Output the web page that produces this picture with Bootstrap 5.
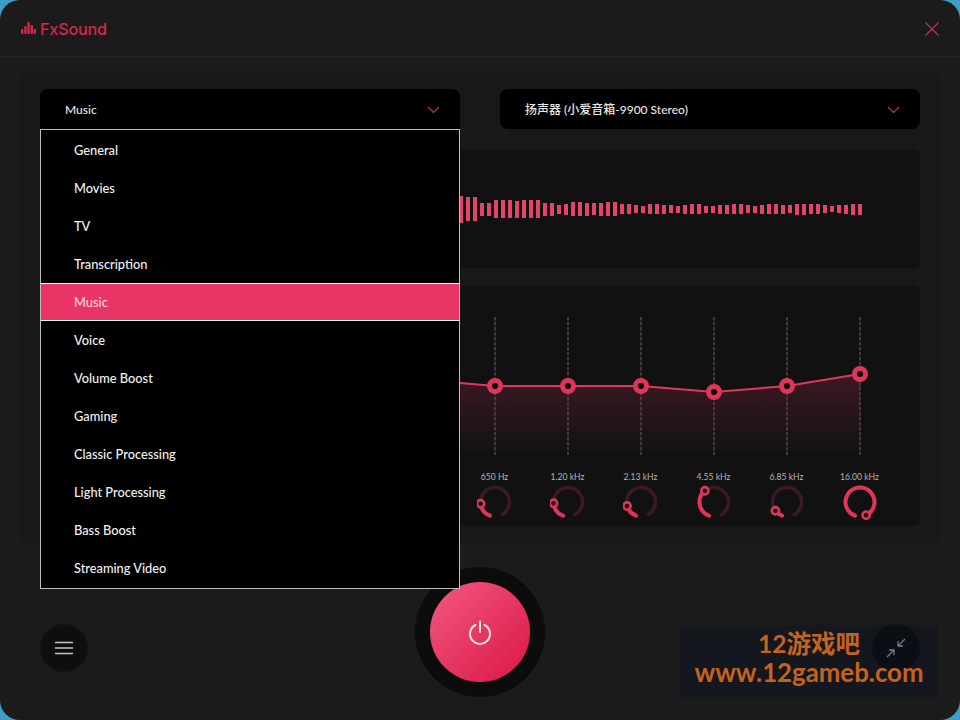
<!DOCTYPE html>
<html lang="en">

<head>
    <meta charset="UTF-8" />
    <meta name="viewport" content="width=device-width, initial-scale=1" />
    <title>FxSound</title>
    <link href="https://cdn.jsdelivr.net/npm/bootstrap@5.3.0/dist/css/bootstrap.min.css" rel="stylesheet">
    <style>
        html, body { width: 960px; height: 720px; overflow: hidden; }
        body { background: #3f9dc3; font-family: Lato, "Noto Sans CJK SC", sans-serif; color: #fff; }
        .fx-window { height: 720px; background: #1b1b1b; border-radius: 20px; position: relative; }
        .fx-header { height: 57px; padding: 2px 21px 0; border-bottom: 1px solid #252525; }
        .fx-logo { font-family: Inter, sans-serif; font-size: 16.2px; font-weight: 500; color: #d8264f; letter-spacing: -.2px; }
        .fx-panel { margin: 16px 20px 0; padding: 16px 20px 18px; height: 471px; background: #181818; border-radius: 8px; }
        .fx-select { width: 420px; height: 40px; padding: 2px 20px 0 25px; background: #000; color: #e6e6e6; font-size: 12px; font-weight: 500; border: 0; border-radius: 8px 8px 0 0; }
        .fx-select-round { border-radius: 8px; }
        .fx-select:hover, .fx-select:active { background: #000 !important; color: #e6e6e6 !important; }
        .fx-menu { width: 420px; top: 40px; left: 0; padding: 1px 0; margin: 0; background: #000; border: 1px solid #bdbdbd; border-radius: 0; z-index: 20; }
        .fx-menu .dropdown-item { height: 38px; padding: 0 33px; line-height: 38px; font-size: 12.8px; font-weight: 500; color: #f2f2f2; }
        .fx-menu .dropdown-item.active { background: #e93565; color: #fbd3dd; line-height: 36px; border-top: 1px solid #fff; border-bottom: 1px solid #fff; }
        .fx-viz { height: 118px; margin-top: 21px; padding-right: 58px; background: #111112; border-radius: 6px; gap: 3px; }
        .fx-bar { width: 4px; background: #e2456a; flex-shrink: 0; }
        .fx-eq { height: 240px; margin-top: 18px; padding-top: 26px; background: #111112; border-radius: 6px; }
        .fx-chart { display: block; }
        .fx-bands { padding-right: 24px; margin-top: 9px; }
        .fx-band { width: 73px; }
        .fx-band-label { font-size: 8.6px; line-height: 12px; color: #b4b4b4; }
        .fx-knob { display: block; margin: 1px auto 0; }
        .fx-footer { height: 130px; margin-top: 23px; padding: 0 40px; }
        .fx-round { width: 48px; height: 48px; margin-top: 32px; background: #0e0e0f; border-radius: 50%; }
        .fx-power-ring { width: 130px; height: 130px; background: #0c0c0d; border-radius: 50%; }
        .fx-power { width: 100px; height: 100px; background: linear-gradient(135deg, #f25880, #da1744); border-radius: 50%; }
        .fx-watermark { left: 680px; top: 625px; width: 258px; height: 72px; padding-bottom: 4px; background: rgba(10, 18, 40, .3); color: #c4631f; font-weight: 700; line-height: 1.15; font-family: Lato, "Noto Sans CJK SC", sans-serif; }
        .fx-wm-big { font-size: 24.5px; }
        .fx-wm-url { font-size: 25.8px; }
    </style>
</head>

<body>
    <div class="fx-window d-flex flex-column">
        <header class="fx-header d-flex justify-content-between align-items-center">
            <div class="d-flex align-items-center gap-1">
                <svg width="15" height="13" viewBox="0 0 15 13" fill="#d8264f">
                    <rect x="0" y="7" width="2.4" height="5" rx="1" />
                    <rect x="3.2" y="4" width="2.4" height="8" rx="1" />
                    <rect x="6.4" y="0" width="2.4" height="12" rx="1" />
                    <rect x="9.6" y="3" width="2.4" height="9" rx="1" />
                    <rect x="12.6" y="7" width="2.4" height="5" rx="1" />
                </svg>
                <span class="fx-logo">FxSound</span>
            </div>
            <svg width="14" height="14" viewBox="0 0 14 14" stroke="#c4325a" stroke-width="1.1">
                <path d="M0.5 0.5L13.5 13.5M13.5 0.5L0.5 13.5" />
            </svg>
        </header>

        <section class="fx-panel">
            <div class="d-flex justify-content-between">
                <div class="position-relative">
                    <button class="btn fx-select d-flex justify-content-between align-items-center" type="button">
                        <span>Music</span>
                        <svg width="13" height="8" viewBox="0 0 13 8" fill="none" stroke="#c4325a" stroke-width="1.1">
                            <path d="M1 1L6.5 6.5L12 1" />
                        </svg>
                    </button>
                    <ul id="preset-menu" class="dropdown-menu show position-absolute fx-menu"></ul>
                </div>
                <button class="btn fx-select fx-select-round d-flex justify-content-between align-items-center" type="button">
                    <span>扬声器 (小爱音箱-9900 Stereo)</span>
                    <svg width="13" height="8" viewBox="0 0 13 8" fill="none" stroke="#c4325a" stroke-width="1.1">
                        <path d="M1 1L6.5 6.5L12 1" />
                    </svg>
                </button>
            </div>

            <div id="viz" class="fx-viz d-flex justify-content-end align-items-center"></div>

            <div class="fx-eq">
                <svg id="chart" class="fx-chart" width="880" height="150" viewBox="0 0 880 150"></svg>
                <div id="bands" class="fx-bands d-flex justify-content-end"></div>
            </div>
        </section>

        <footer class="fx-footer d-flex justify-content-between align-items-center">
            <div class="fx-round d-flex justify-content-center align-items-center">
                <svg width="18" height="14" viewBox="0 0 18 14" stroke="#c8c8c8" stroke-width="1.5">
                    <path d="M0 1.5H18M0 7H18M0 12.5H18" />
                </svg>
            </div>
            <div class="fx-power-ring d-flex justify-content-center align-items-center">
                <div class="fx-power d-flex justify-content-center align-items-center">
                    <svg width="24" height="25" viewBox="0 0 24 25" fill="none" stroke="#fbe4ea" stroke-width="2" stroke-linecap="round">
                        <path d="M7.5 5A10 10 0 1 0 16.5 5M12 1.5V12" />
                    </svg>
                </div>
            </div>
            <div class="fx-round d-flex justify-content-center align-items-center">
                <svg width="22" height="22" viewBox="0 0 22 22" fill="none" stroke="#a8a8ac" stroke-width="1.3">
                    <path d="M20 2L13 9M13 4V9H18M2 20L9 13M9 18V13H4" />
                </svg>
            </div>
        </footer>

        <div class="fx-watermark position-absolute d-flex flex-column justify-content-center align-items-center">
            <div class="fx-wm-big">12游戏吧</div>
            <div class="fx-wm-url">www.12gameb.com</div>
        </div>
    </div>

    <script src="https://cdn.jsdelivr.net/npm/bootstrap@5.3.0/dist/js/bootstrap.bundle.min.js"></script>
    <script>
        // Preset list
        const presets = ["General", "Movies", "TV", "Transcription", "Music", "Voice", "Volume Boost", "Gaming",
            "Classic Processing", "Light Processing", "Bass Boost", "Streaming Video"];
        document.getElementById("preset-menu").innerHTML = presets.map(p =>
            `<li><a class="dropdown-item${p === "Music" ? " active" : ""}" href="#">${p}</a></li>`).join("");

        // Visualizer bars, heights in px
        const bars = [27, 24, 24, 13, 13, 18, 18, 18, 17, 18, 18, 18, 13, 13, 9, 11, 14, 14, 13, 12, 13, 14, 14, 10,
            10, 8, 7, 10, 10, 9, 8, 7, 9, 10, 10, 7, 7, 9, 9, 10, 10, 8, 7, 9, 10, 10, 9, 8, 11, 11, 10, 10, 8, 6, 8, 9, 11, 11];
        document.getElementById("viz").innerHTML = bars.map(h =>
            `<span class="fx-bar" style="height:${h}px"></span>`).join("");

        // EQ chart, coordinates relative to the svg (origin 40,312 on screen)
        const bands = [
            { x: 455, y: 74, label: "650 Hz", angle: -97 },
            { x: 528, y: 74, label: "1.20 kHz", angle: -95 },
            { x: 601, y: 74, label: "2.13 kHz", angle: -106 },
            { x: 674, y: 80, label: "4.55 kHz", angle: -39 },
            { x: 747, y: 74, label: "6.85 kHz", angle: -127 },
            { x: 820, y: 62, label: "16.00 kHz", angle: 155 },
        ];
        const linePts = "420,71 " + bands.map(b => `${b.x},${b.y}`).join(" ");
        let chart = `<defs><linearGradient id="fill" x1="0" y1="0" x2="0" y2="1">
            <stop offset="0" stop-color="#e8365f" stop-opacity=".2" /><stop offset="1" stop-color="#e8365f" stop-opacity="0" />
            </linearGradient></defs>`;
        chart += `<polygon points="${linePts} 820,143 420,143" fill="url(#fill)" />`;
        bands.forEach(b => {
            chart += `<line x1="${b.x}" y1="5" x2="${b.x}" y2="143" stroke="#554549" stroke-width="1.5" stroke-dasharray="3.5 1.5" />`;
        });
        chart += `<polyline points="${linePts}" fill="none" stroke="#e0385d" stroke-width="2" />`;
        bands.forEach(b => {
            chart += `<circle cx="${b.x}" cy="${b.y}" r="5.5" fill="#050505" stroke="#df3559" stroke-width="5" />`;
        });
        document.getElementById("chart").innerHTML = chart;

        // Knobs under the chart
        const pt = (a, r) => {
            const t = a * Math.PI / 180;
            return [18 + r * Math.sin(t), 18 - r * Math.cos(t)];
        };
        const arc = (from, to, r) => {
            const s = pt(from, r), e = pt(to, r);
            return `M${s[0].toFixed(2)} ${s[1].toFixed(2)}A${r} ${r} 0 ${to - from > 180 ? 1 : 0} 1 ${e[0].toFixed(2)} ${e[1].toFixed(2)}`;
        };
        const START = -160, END = 150, R = 14.5;
        document.getElementById("bands").innerHTML = bands.map(b => {
            const h = pt(b.angle, R);
            return `<div class="fx-band text-center">
                <div class="fx-band-label">${b.label}</div>
                <svg class="fx-knob" width="36" height="36" viewBox="0 0 36 36" fill="none" stroke-linecap="round">
                    <path d="${arc(START, END, R)}" stroke="#3a1a23" stroke-width="3.5" />
                    <path d="${arc(START, b.angle, R)}" stroke="#df3559" stroke-width="4" />
                    <circle cx="${h[0].toFixed(2)}" cy="${h[1].toFixed(2)}" r="3.6" fill="#111112" stroke="#df3559" stroke-width="2.6" />
                </svg>
            </div>`;
        }).join("");
    </script>
</body>

</html>
